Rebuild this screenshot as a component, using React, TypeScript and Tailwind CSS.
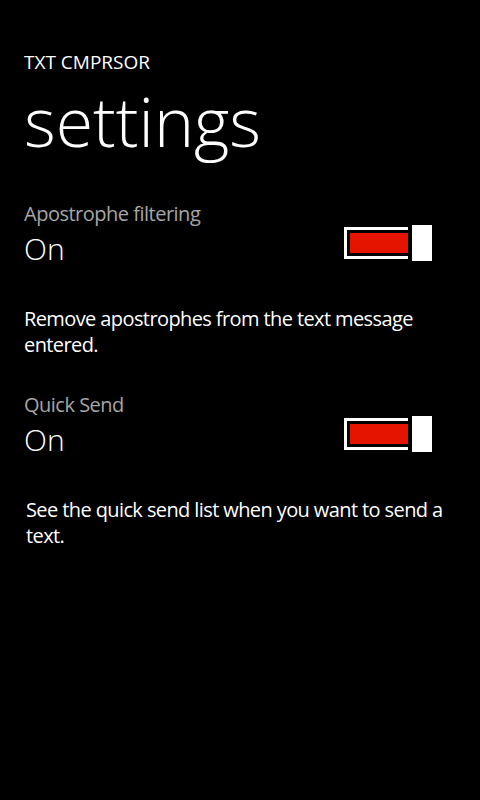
import React, { useState } from 'react';

const font = { fontFamily: '"Open Sans", "Noto Sans", sans-serif' };

interface ToggleProps {
    on: boolean;
    onChange: (v: boolean) => void;
}

const Toggle: React.FC<ToggleProps> = ({ on, onChange }) => (
    <button type="button" onClick={() => onChange(!on)} className="flex items-center gap-[4px] -mt-[3px]">
        <div className="flex border-[3px] border-r-0 border-white p-[3px] pr-0">
            <div className={`w-[58px] h-[20px] ${on ? 'bg-[#e51400]' : 'bg-black'}`} />
        </div>
        <div className="w-[20px] h-[36px] bg-white" />
    </button>
);

interface SettingProps {
    label: string;
    description: string;
    on: boolean;
    onChange: (v: boolean) => void;
    first?: boolean;
    descIndent?: boolean;
}

const Setting: React.FC<SettingProps> = ({ label, description, on, onChange, first, descIndent }) => (
    <div className={first ? 'mt-[43px]' : 'mt-[33px]'}>
        <div className="text-[20px] leading-[28px] tracking-[-0.5px] text-[#a6a6a6]">{label}</div>
        <div className="flex items-start justify-between pr-[48px]">
            <div className="mt-[3px] text-[30px] leading-[36px] font-light text-white">{on ? 'On' : 'Off'}</div>
            <Toggle on={on} onChange={onChange} />
        </div>
        <p className={`mt-[39px] text-[20px] leading-[26px] tracking-[-0.6px] text-white pr-[24px] ${descIndent ? 'pl-[2px]' : ''}`}>
            {description}
        </p>
    </div>
);

export default function App() {
    const [apostrophe, setApostrophe] = useState(true);
    const [quickSend, setQuickSend] = useState(true);

    return (
        <div className="w-[480px] h-[800px] bg-black text-white overflow-hidden pl-[24px] pt-[50px]" style={font}>
            <div className="text-[19px] leading-[24px] text-white">TXT CMPRSOR</div>
            <h1 className="mt-[11px] text-[68px] leading-[72px] font-light">settings</h1>

            <Setting
                first
                label="Apostrophe filtering"
                on={apostrophe}
                onChange={setApostrophe}
                description="Remove apostrophes from the text message entered."
            />
            <Setting
                label="Quick Send"
                on={quickSend}
                onChange={setQuickSend}
                descIndent
                description="See the quick send list when you want to send a text."
            />
        </div>
    );
}
